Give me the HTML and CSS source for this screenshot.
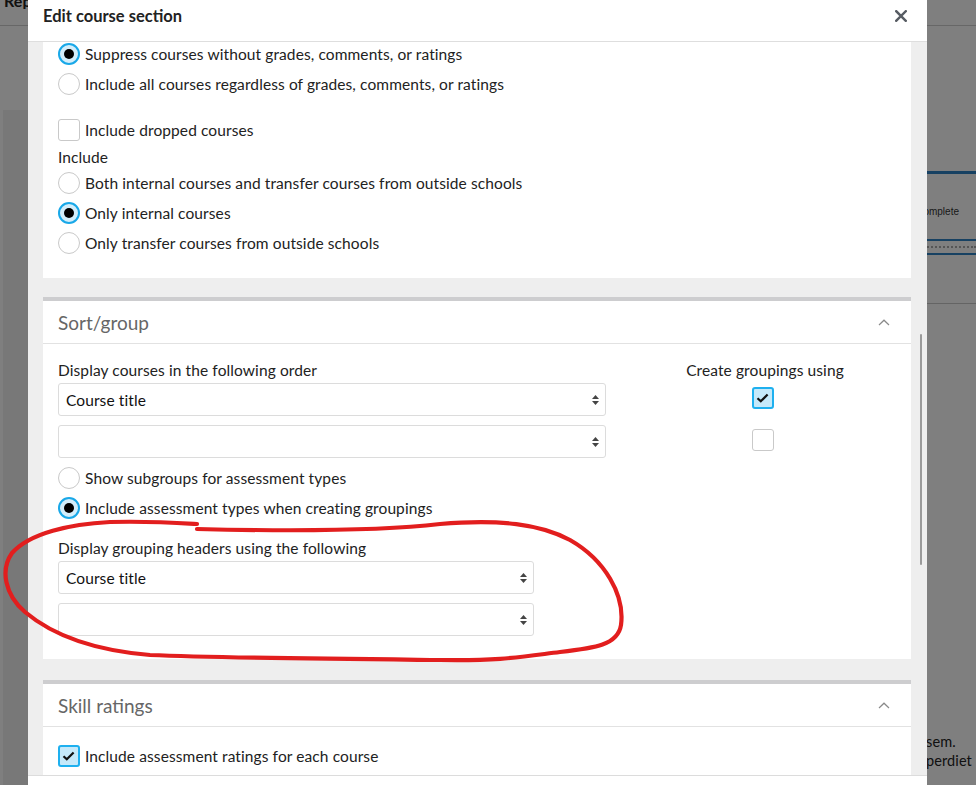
FILE: index.html
```html
<!DOCTYPE html>
<html lang="en">
<head>
<meta charset="utf-8">
<title>Edit course section</title>
<link rel="stylesheet" href="styles.css">
</head>
<body>
<div class="page">
  <header class="page-header"><div class="page-title">Report cards</div></header>
  <div class="page-main">
    <aside class="page-side"><div class="side-top"></div><div class="side-rest"></div></aside>
    <main class="page-content">
      <div class="status-table">
        <div class="status-row">Complete</div>
        <div class="status-dots"></div>
        <div class="status-end"></div>
      </div>
      <div class="page-section"></div>
      <div class="page-text">
        <p>sem.</p>
        <p>perdiet</p>
      </div>
    </main>
  </div>
</div>

<div class="overlay"></div>

<div class="dialog" role="dialog" aria-label="Edit course section">
  <div class="dialog-header">
    <h2 class="dialog-title">Edit course section</h2>
    <button class="close" aria-label="Close">
      <svg width="12" height="12" viewBox="0 0 12 12"><path d="M1.2 1.2L10.8 10.8M10.8 1.2L1.2 10.8" stroke="#575c63" stroke-width="2.4" stroke-linecap="square" fill="none"/></svg>
    </button>
  </div>

  <div class="dialog-body">
    <div class="scroll">
      <section class="card card-first">
        <div class="opt"><span class="radio checked"><span class="dot"></span></span><span>Suppress courses without grades, comments, or ratings</span></div>
        <div class="opt"><span class="radio"></span><span>Include all courses regardless of grades, comments, or ratings</span></div>
        <div class="opt opt-gap"><span class="check"></span><span>Include dropped courses</span></div>
        <div class="field-label label-include">Include</div>
        <div class="opt"><span class="radio"></span><span>Both internal courses and transfer courses from outside schools</span></div>
        <div class="opt"><span class="radio checked"><span class="dot"></span></span><span>Only internal courses</span></div>
        <div class="opt"><span class="radio"></span><span>Only transfer courses from outside schools</span></div>
      </section>

      <section class="card card-panel">
        <div class="card-header">
          <span class="card-title">Sort/group</span>
          <svg class="chev" width="12" height="7" viewBox="0 0 12 7"><path d="M1 6L6 1.2L11 6" stroke="#8a8a8a" stroke-width="1.2" fill="none"/></svg>
        </div>
        <div class="card-body sort-body">
          <div class="sort-top">
            <div class="sort-left">
              <div class="field-label">Display courses in the following order</div>
              <div class="select wide first-select"><span>Course title</span><svg width="7" height="10" viewBox="0 0 7 10"><path d="M3.5 0L7 4H0Z M3.5 10L0 6H7Z" fill="#444"/></svg></div>
              <div class="select wide next-select"><span></span><svg width="7" height="10" viewBox="0 0 7 10"><path d="M3.5 0L7 4H0Z M3.5 10L0 6H7Z" fill="#444"/></svg></div>
            </div>
            <div class="sort-right">
              <div class="field-label">Create groupings using</div>
              <span class="check checked group-check group-check-1"><svg width="22" height="22" viewBox="0 0 22 22"><path d="M5.5 11.2L8.8 14.3L15.6 7.4" stroke="#111" stroke-width="2.2" fill="none"/></svg></span>
              <span class="check group-check group-check-2"></span>
            </div>
          </div>
          <div class="opt opt-after-select"><span class="radio"></span><span>Show subgroups for assessment types</span></div>
          <div class="opt"><span class="radio checked"><span class="dot"></span></span><span>Include assessment types when creating groupings</span></div>
          <div class="field-label label-grouping">Display grouping headers using the following</div>
          <div class="select narrow first-select"><span>Course title</span><svg width="7" height="10" viewBox="0 0 7 10"><path d="M3.5 0L7 4H0Z M3.5 10L0 6H7Z" fill="#444"/></svg></div>
          <div class="select narrow next-select"><span></span><svg width="7" height="10" viewBox="0 0 7 10"><path d="M3.5 0L7 4H0Z M3.5 10L0 6H7Z" fill="#444"/></svg></div>
        </div>
      </section>

      <section class="card card-panel card-skill">
        <div class="card-header">
          <span class="card-title">Skill ratings</span>
          <svg class="chev" width="12" height="7" viewBox="0 0 12 7"><path d="M1 6L6 1.2L11 6" stroke="#8a8a8a" stroke-width="1.2" fill="none"/></svg>
        </div>
        <div class="card-body skill-body">
          <div class="opt"><span class="check checked"><svg width="22" height="22" viewBox="0 0 22 22"><path d="M5.5 11.2L8.8 14.3L15.6 7.4" stroke="#111" stroke-width="2.2" fill="none"/></svg></span><span>Include assessment ratings for each course</span></div>
        </div>
      </section>
    </div>
    <div class="scrollbar"></div>
  </div>

  <div class="dialog-footer"></div>
</div>

<svg class="annotation" width="976" height="785" viewBox="0 0 976 785" aria-hidden="true">
  <path d="M197 529 C280 531 380 531 440 524 C500 519 540 524 570 540 C605 560 625 595 621 625 C618 645 595 648 560 652 C520 657 500 661 440 660 C340 659 220 658 150 655 C90 650 50 633 25 612 C5 595 0 570 12 553 C30 533 70 524 110 522 C150 521 180 523 197 524" stroke="#e21e1e" stroke-width="4.2" fill="none" stroke-linecap="round" stroke-linejoin="round"/>
</svg>
</body>
</html>
```

FILE: styles.css
```css
* { box-sizing: border-box; }

html, body {
  margin: 0;
  padding: 0;
}

body {
  width: 976px;
  height: 785px;
  overflow: hidden;
  position: relative;
  font-family: Lato, "Liberation Sans", sans-serif;
  font-size: 15.5px;
  letter-spacing: 0.1px;
  color: #222;
  background: #fff;
}

/* ---------- background page ---------- */
.page {
  width: 976px;
  height: 785px;
}

.page-header {
  height: 26px;
  border-bottom: 1px solid #cfcfcf;
  padding-left: 4px;
  overflow: hidden;
}

.page-title {
  width: 24px;
  overflow: hidden;
  white-space: nowrap;
  font-weight: 700;
  font-size: 16px;
  line-height: 16px;
  margin-top: -7px;
  color: #222;
}

.page-main {
  display: flex;
  height: 759px;
}

.page-side {
  width: 300px;
  border-left: 3px solid #fff;
  display: flex;
  flex-direction: column;
}

.side-top {
  height: 84px;
  background: #fff;
}

.side-rest {
  flex: 1;
  background: #f1f1f1;
}

.page-content {
  flex: 1;
}

.status-table {
  margin-top: 145px;
  border-top: 3px solid #2f82c4;
}

.status-row {
  height: 67px;
  border-bottom: 2px solid #2f82c4;
  text-align: right;
  padding-right: 17px;
  font-size: 10px;
  letter-spacing: 0;
  line-height: 76px;
  color: #333;
  font-family: "Liberation Sans", sans-serif;
}

.status-dots {
  margin-top: 5px;
  border-top: 2px dotted #aaa;
}

.status-end {
  margin-top: 5px;
  border-top: 2px solid #2f82c4;
}

.page-section {
  margin-top: 48px;
  border-top: 1px solid #c9c9c9;
}

.page-text {
  margin-top: 428px;
  padding-left: 626px;
  font-size: 14.5px;
  line-height: 19px;
  color: #222;
}

.page-text p {
  margin: 0;
}

.overlay {
  position: absolute;
  inset: 0;
  background: rgba(0, 0, 0, 0.5);
}

/* ---------- dialog ---------- */
.dialog {
  position: absolute;
  left: 28px;
  top: 0;
  width: 899px;
  height: 860px;
  background: #fff;
  display: flex;
  flex-direction: column;
}

.dialog-header {
  height: 42px;
  flex: none;
  border-bottom: 1px solid #dedede;
  display: flex;
  align-items: center;
  justify-content: space-between;
  padding: 0 20px 0 15px;
}

.dialog-title {
  margin: 0;
  font-size: 16.5px;
  font-weight: 700;
  letter-spacing: 0;
  color: #222;
  line-height: 20px;
  margin-top: -10px;
}

.close {
  border: 0;
  background: none;
  padding: 0;
  width: 12px;
  height: 12px;
  display: flex;
  margin-top: -9px;
}

.dialog-body {
  height: 733px;
  flex: none;
  background: #eeeeee;
  padding: 0 16px 0 15px;
  overflow: hidden;
  position: relative;
}

.scroll {
  margin-top: -3px;
}

.scrollbar {
  position: absolute;
  left: 892px;
  top: 292px;
  width: 2px;
  height: 231px;
  background: #9a9a9a;
  border-radius: 1px;
}

.dialog-footer {
  flex: 1;
  border-top: 1px solid #dcdcdc;
  background: #fff;
}

/* ---------- cards ---------- */
.card {
  background: #fff;
}

.card-first {
  padding: 0 15px 20px;
}

.card-panel {
  margin-top: 19px;
  border-top: 4px solid #cdcdcf;
}

.card-skill {
  margin-top: 21px;
}

.card-header {
  height: 43px;
  border-bottom: 1px solid #e2e2e2;
  display: flex;
  align-items: center;
  justify-content: space-between;
  padding: 0 21px 0 15px;
}

.card-title {
  font-size: 19px;
  letter-spacing: 0;
  color: #666;
  line-height: 24px;
  margin-top: 1px;
}

.card-body {
  padding: 15px 15px 23px;
}

.skill-body {
  padding-top: 14px;
}

/* ---------- options ---------- */
.opt {
  height: 30px;
  display: flex;
  align-items: center;
  gap: 5px;
}

.opt > span:last-child {
  margin-top: -1px;
}

.opt-gap {
  margin-top: 16px;
}

.opt-after-select {
  margin-top: 5px;
}

.field-label {
  line-height: 20px;
  height: 20px;
}

.label-include {
  height: 22px;
  line-height: 22px;
  margin-top: 1px;
}

.label-grouping {
  margin-top: 14px;
}

.sort-body .field-label {
  padding-top: 1px;
}

.radio {
  width: 22px;
  height: 22px;
  border-radius: 50%;
  border: 1px solid #c9c9c9;
  background: #fff;
  flex: none;
  display: flex;
  align-items: center;
  justify-content: center;
}

.radio.checked {
  border: 2px solid #19a8e8;
  background: #d4eefb;
}

.dot {
  width: 10px;
  height: 10px;
  border-radius: 50%;
  background: #000;
}

.check {
  width: 22px;
  height: 22px;
  border-radius: 3px;
  border: 1px solid #c9c9c9;
  background: #fff;
  flex: none;
  display: flex;
  align-items: center;
  justify-content: center;
}

.check.checked {
  border: 2px solid #1eb0ef;
  background: #c5e9fa;
}

.check.checked svg {
  margin: -2px;
}

/* ---------- selects ---------- */
.select {
  height: 33px;
  border: 1px solid #dcdcdc;
  border-radius: 3px;
  display: flex;
  align-items: center;
  justify-content: space-between;
  padding: 0 6px 0 7px;
  color: #111;
}

.select.wide { width: 548px; }
.select.narrow { width: 476px; }

.first-select { margin-top: 4px; }
.next-select { margin-top: 9px; }

.sort-top {
  display: flex;
}

.sort-left {
  width: 548px;
  flex: none;
}

.sort-right {
  flex: 1;
  margin-left: 28px;
  display: flex;
  flex-direction: column;
  align-items: center;
}

.group-check { margin-right: 4px; }
.group-check-1 { margin-top: 8px; }
.group-check-2 { margin-top: 20px; }

/* ---------- annotation ---------- */
.annotation {
  position: absolute;
  left: 0;
  top: 0;
  pointer-events: none;
}
```
